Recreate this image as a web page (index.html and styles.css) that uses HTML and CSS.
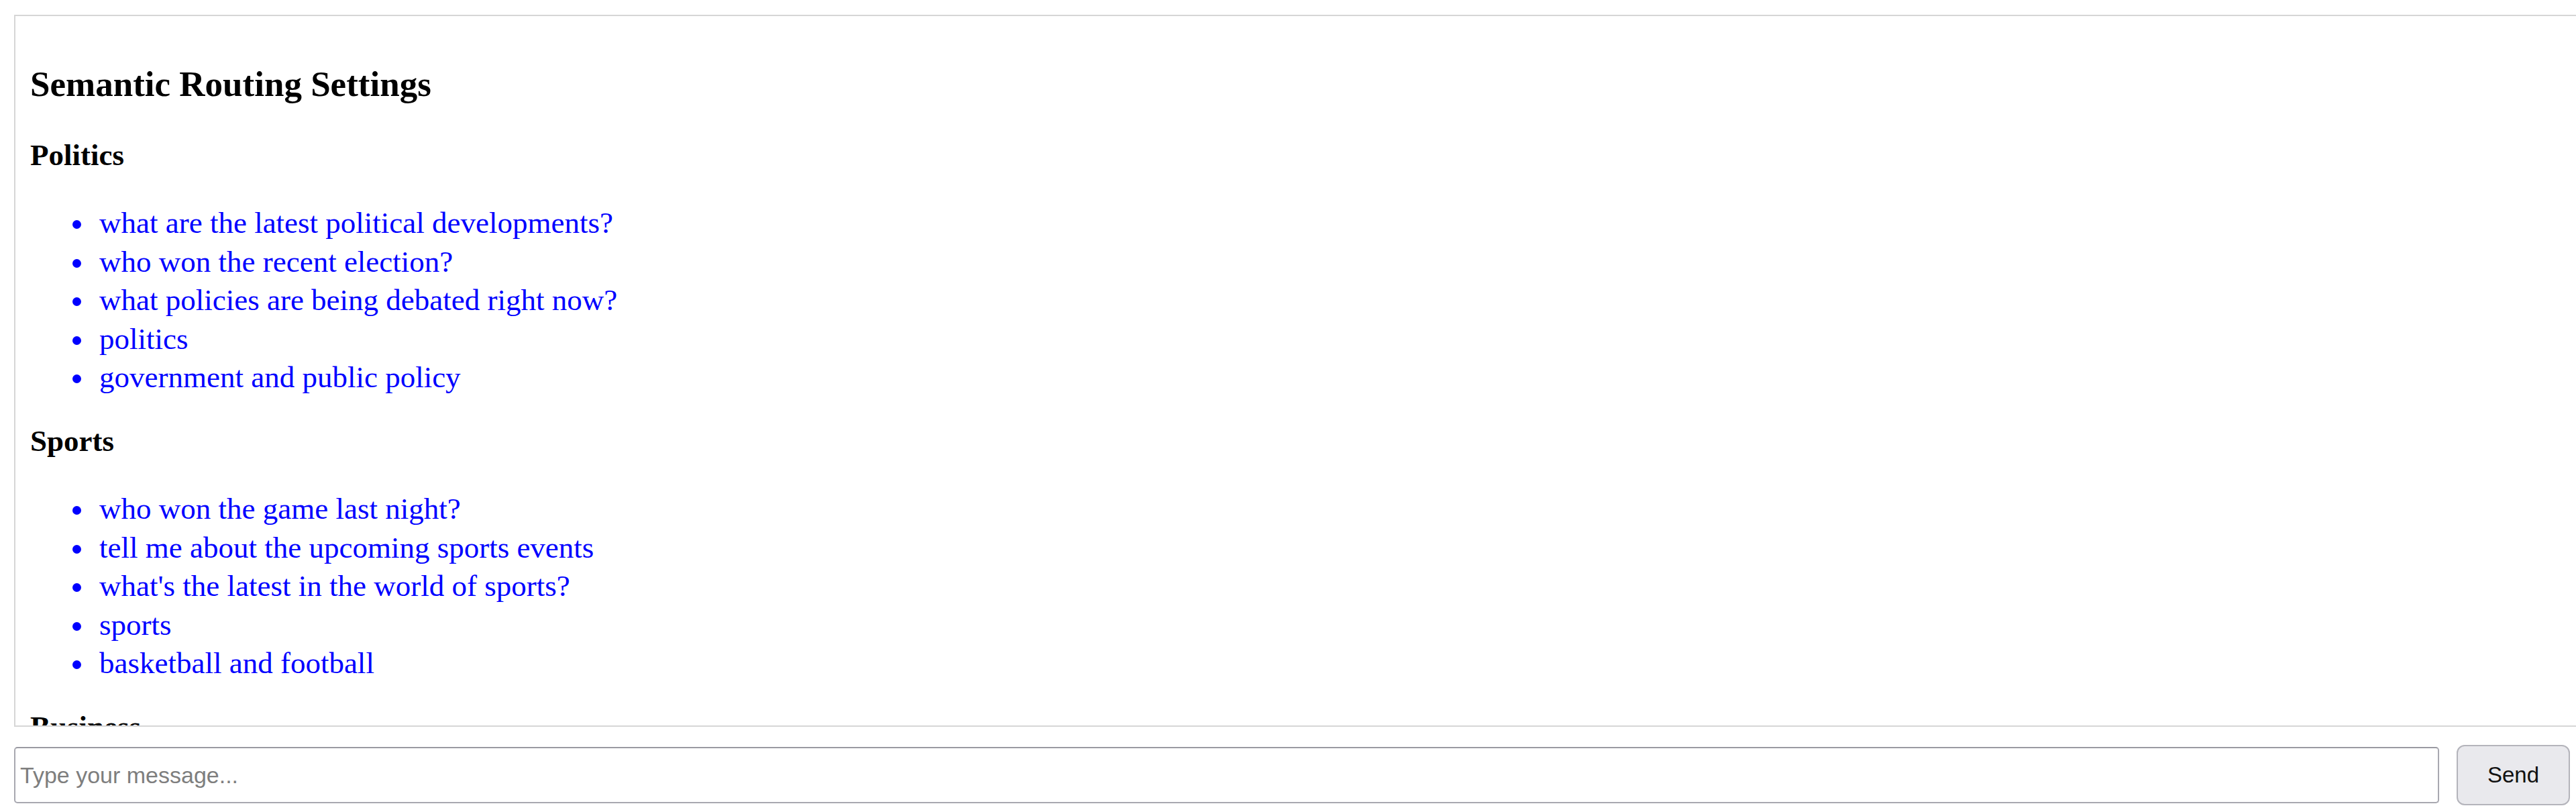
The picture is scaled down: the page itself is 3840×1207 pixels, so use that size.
FILE: index.html
```html
<!DOCTYPE html>
<html lang="en">
<head>
    <meta charset="UTF-8">
    <meta name="viewport" content="width=device-width, initial-scale=1.0">
    <title>Semantic Routing Chat</title>
    <link rel="stylesheet" href="styles.css">
</head>
<body>
    <div class="chat-app">
        <!-- Settings / messages panel -->
        <div class="chat-window">
            <h3 class="settings-title">Semantic Routing Settings</h3>

            <h4 class="route-name">Politics</h4>
            <ul class="route-utterances">
                <li>what are the latest political developments?</li>
                <li>who won the recent election?</li>
                <li>what policies are being debated right now?</li>
                <li>politics</li>
                <li>government and public policy</li>
            </ul>

            <h4 class="route-name">Sports</h4>
            <ul class="route-utterances">
                <li>who won the game last night?</li>
                <li>tell me about the upcoming sports events</li>
                <li>what's the latest in the world of sports?</li>
                <li>sports</li>
                <li>basketball and football</li>
            </ul>

            <h4 class="route-name">Business</h4>
            <ul class="route-utterances">
                <li>how is the stock market doing?</li>
                <li>what are the latest business news?</li>
                <li>business</li>
            </ul>
        </div>

        <!-- Input bar -->
        <form class="chat-input">
            <input type="text" id="messageInput" placeholder="Type your message...">
            <button type="submit" class="send-btn">Send</button>
        </form>
    </div>
</body>
</html>
```

FILE: styles.css
```css
/* ----- Page ----- */
body {
    margin: 0;
    overflow-x: hidden;
    background: #ffffff;
    font-family: 'Liberation Serif', 'Times New Roman', serif;
}

.chat-app {
    display: flex;
    flex-direction: column;
    gap: 27px;
    height: 100vh;
    padding: 22px 0 7px 21px;
    box-sizing: border-box;
}

/* ----- Settings panel ----- */
.chat-window {
    flex: 1;
    min-height: 0;
    width: 100%;
    padding: 25px 22px 0;
    border: 2px solid #d6d6d6;
    overflow-y: auto;
    line-height: 57.5px;
}

.settings-title {
    margin: 48px 0;
    font-size: 53px;
    font-weight: 700;
}

.route-name {
    margin: 37px 0 44px;
    font-size: 45px;
    font-weight: 700;
}

.route-utterances {
    margin: 0;
    padding-left: 96px;
    color: #0000ff;
    font-size: 45px;
}

.route-utterances li {
    padding-left: 7px;
}

/* ----- Input bar ----- */
.chat-input {
    display: flex;
    align-items: center;
    gap: 26px;
    margin: 0 9px 0 0;
}

.chat-input input {
    flex: 1;
    height: 84px;
    box-sizing: border-box;
    padding: 0 7px;
    border: 2px solid #a8a8b0;
    border-top-color: #9a9aa2;
    border-radius: 5px;
    font-family: 'Liberation Sans', Arial, sans-serif;
    font-size: 34px;
    color: #000;
}

.chat-input input::placeholder {
    color: #7e7e7e;
}

.send-btn {
    width: 169px;
    height: 90px;
    background: #e9e9ed;
    border: 2px solid #b4b4bb;
    border-radius: 12px;
    font-family: 'Liberation Sans', Arial, sans-serif;
    font-size: 33px;
    color: #111;
    cursor: pointer;
}

.send-btn:hover {
    background: #dcdce1;
}
```
